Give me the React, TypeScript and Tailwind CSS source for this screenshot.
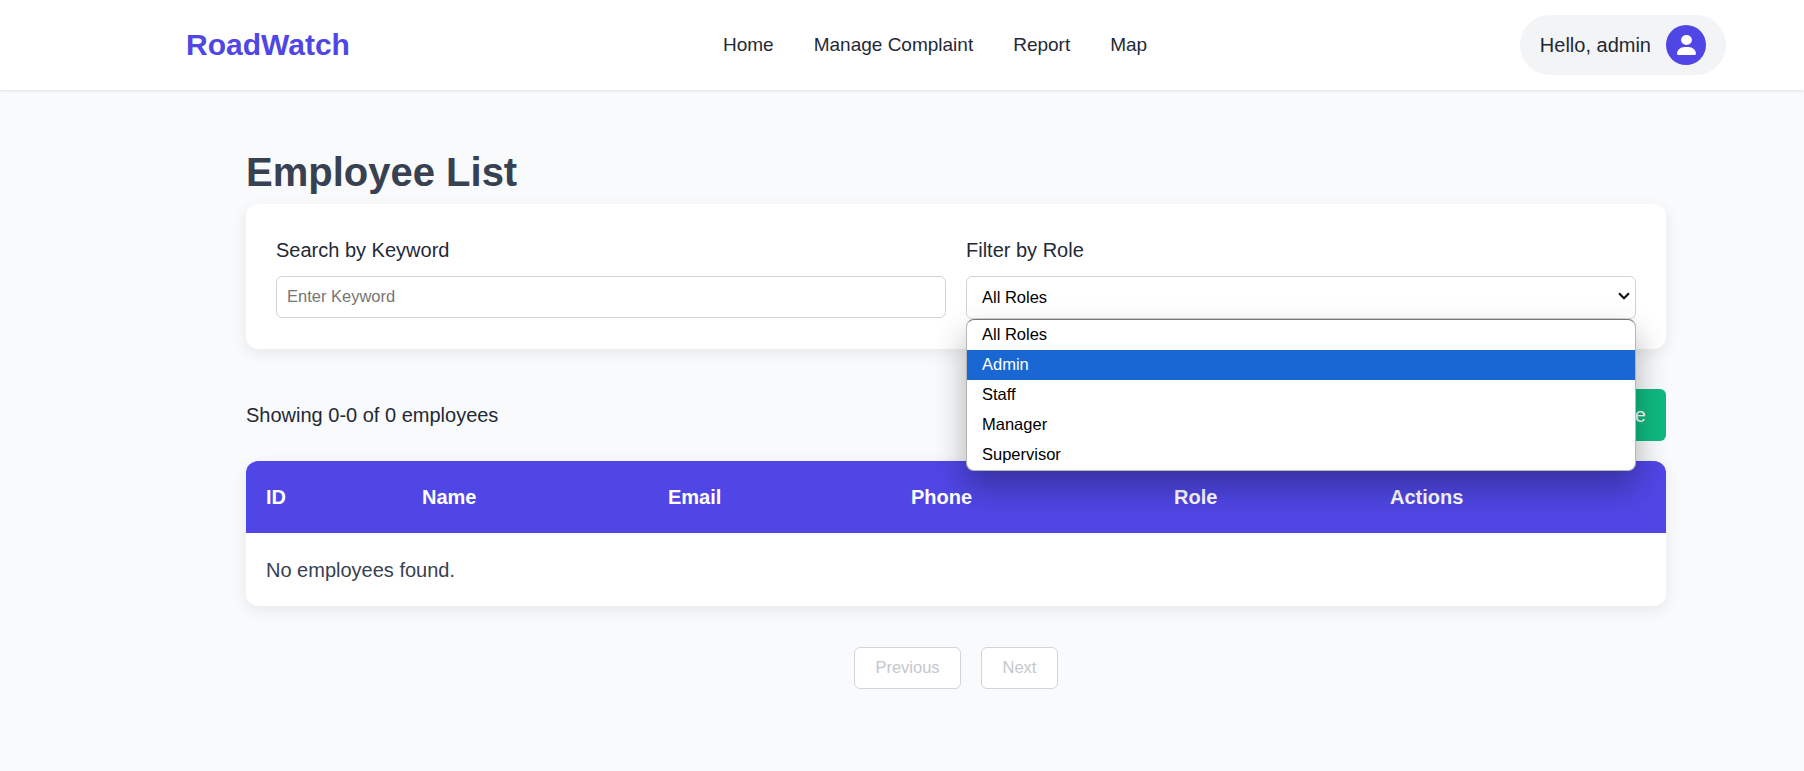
import React from "react";

const navItems = ["Home", "Manage Complaint", "Report", "Map"];
const roles = ["All Roles", "Admin", "Staff", "Manager", "Supervisor"];
const columns = [
  { label: "ID", width: "w-[156px]" },
  { label: "Name", width: "w-[246px]" },
  { label: "Email", width: "w-[243px]" },
  { label: "Phone", width: "w-[263px]" },
  { label: "Role", width: "w-[216px]" },
  { label: "Actions", width: "w-[296px]" },
];

export default function App() {
  return (
    <div className="min-h-[771px] bg-[#f9fafb] font-['Liberation_Sans',Arial,sans-serif] text-[#1f2937]">
      <header className="flex h-[90px] items-center bg-white pl-[186px] pr-[78px] shadow-[0_1px_3px_rgba(0,0,0,0.1)]">
        <div className="-mt-[2px] w-[163px] text-[30px] font-bold text-[#4f46e5]">RoadWatch</div>
        <nav className="ml-[374px] flex gap-10 text-[19px] text-[#1f2937]">
          {navItems.map((n) => (
            <a key={n}>{n}</a>
          ))}
        </nav>
        <div className="ml-auto flex h-[60px] items-center gap-[15px] rounded-[30px] bg-[#f3f4f6] px-5 text-[20px]">
          <span>Hello, admin</span>
          <span className="flex h-10 w-10 items-center justify-center rounded-full bg-[#4f46e5]">
            <svg width="19" height="20" viewBox="0 0 448 512" preserveAspectRatio="none" fill="#fff">
              <path d="M224 256a128 128 0 1 0 0-256 128 128 0 1 0 0 256zm-45.7 48C79.8 304 0 383.800 0 482.300 0 498.700 13.300 512 29.700 512h388.600c16.400 0 29.700-13.300 29.700-29.700C448 383.800 368.200 304 269.700 304h-91.400z" />
            </svg>
          </span>
        </div>
      </header>

      <main className="ml-[246px] w-[1420px] pt-[59px]">
        <h1 className="mb-[9px] text-[40px] leading-[46px] font-bold text-[#374151]">Employee List</h1>

        <section className="grid h-[145px] grid-cols-2 gap-5 rounded-xl bg-white p-[30px] pt-[34px] shadow-[0_4px_15px_rgba(0,0,0,0.08)]">
          <div>
            <label className="mb-[14px] block text-[20px] leading-[24px]">Search by Keyword</label>
            <input
              placeholder="Enter Keyword"
              className="h-[42px] w-full rounded-md border border-[#d1d5db] bg-white px-[10px] pb-[2px] text-[16.5px] placeholder:text-[#757575]"
            />
          </div>
          <div className="relative">
            <label className="mb-[14px] block text-[20px] leading-[24px]">Filter by Role</label>
            <select className="h-[43px] w-full appearance-none rounded-md border border-[#d1d5db] bg-white px-[15px] pb-[1px] text-[16.5px] text-black">
              {roles.map((r) => (
                <option key={r}>{r}</option>
              ))}
            </select>
            <svg
              className="pointer-events-none absolute right-[6px] top-[54px]"
              width="12"
              height="8"
              viewBox="0 0 12 8"
              fill="none"
              stroke="#111"
              strokeWidth="2.2"
            >
              <path d="M1 1.300 6 6.300 11 1.300" />
            </svg>
            <ul className="absolute left-0 top-[81px] z-10 w-[670px] overflow-hidden rounded-lg border border-[#b5b5b5] border-t-[#767676] bg-white text-[16.5px] text-black shadow-[0_16px_32px_rgba(0,0,0,0.3)]">
              {roles.map((r) => (
                <li
                  key={r}
                  className={
                    r === "Admin"
                      ? "flex h-[30px] items-center bg-[#1967d2] pb-[2px] pl-[15px] text-white"
                      : "flex h-[30px] items-center pb-[2px] pl-[15px]"
                  }
                >
                  {r}
                </li>
              ))}
            </ul>
          </div>
        </section>

        <div className="mt-10 flex h-[52px] items-center justify-between">
          <span className="text-[20px]">Showing 0-0 of 0 employees</span>
          <button className="h-[52px] rounded-md bg-[#10b981] px-5 text-[20px] text-white">Add New Employee</button>
        </div>

        <div className="mt-5 overflow-hidden rounded-xl bg-white shadow-[0_4px_15px_rgba(0,0,0,0.08)]">
          <table className="w-full table-fixed border-collapse">
            <thead>
              <tr className="h-[72px] bg-[#4f46e5] text-left text-white">
                {columns.map((c) => (
                  <th key={c.label} className={`${c.width} px-5 text-[20px] font-bold`}>
                    {c.label}
                  </th>
                ))}
              </tr>
            </thead>
            <tbody>
              <tr className="h-[73px]">
                <td colSpan={6} className="px-5 text-[20px] text-[#374151]">
                  No employees found.
                </td>
              </tr>
            </tbody>
          </table>
        </div>

        <div className="mt-[41px] flex justify-center gap-5">
          <button className="h-[42px] w-[107px] rounded-md border border-[#d1d5db] bg-white pb-[2px] text-[16.5px] text-[#c4c7cc]">
            Previous
          </button>
          <button className="h-[42px] w-[77px] rounded-md border border-[#d1d5db] bg-white pb-[2px] text-[16.5px] text-[#c4c7cc]">
            Next
          </button>
        </div>
      </main>
    </div>
  );
}
